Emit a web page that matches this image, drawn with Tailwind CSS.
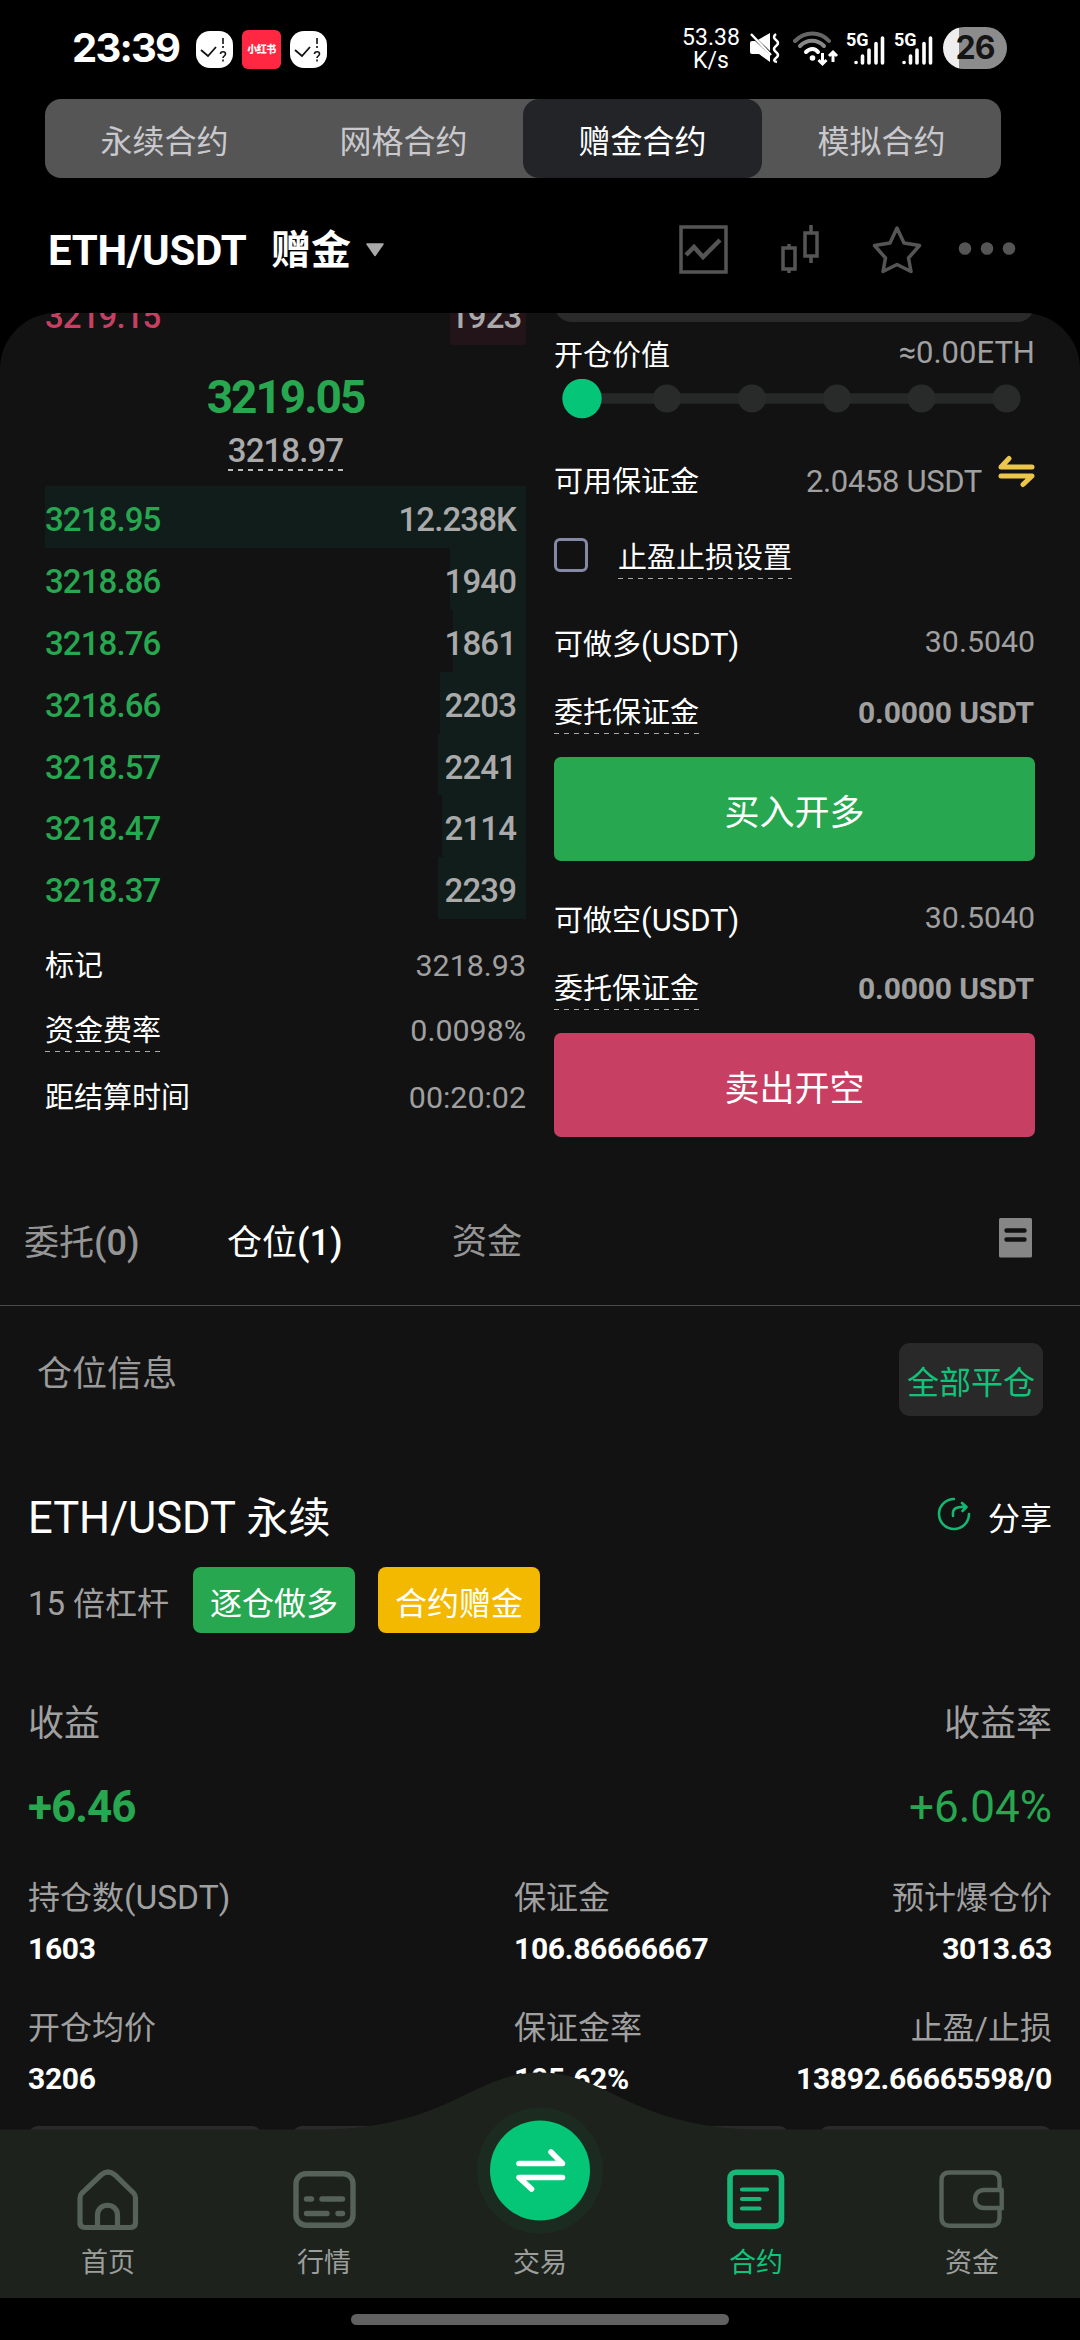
<!DOCTYPE html>
<html lang="zh-CN">
<head>
<meta charset="utf-8">
<title>ETH/USDT</title>
<script src="https://cdn.jsdelivr.net/npm/@tailwindcss/browser@4"></script>
</head>
<body class="bg-black">
<div class="relative h-[2340px] w-[1080px] overflow-hidden bg-black font-[Roboto,'Noto_Sans_CJK_SC',sans-serif] text-[29px] text-white whitespace-nowrap">

  <!-- Status bar -->
  <header class="flex h-[99px] items-center pl-[72px]">
    <div class="flex h-[97px] w-[124px] items-center pb-[3px] font-[Inter,sans-serif] text-[40px] font-bold tracking-[-1.8px]">23:39</div>
    <div class="flex items-center gap-[9px] pb-[1px]">
      <svg width="37" height="37" viewBox="0 0 37 37"><rect width="37" height="37" rx="14" fill="#fff"/><path d="M5 19l7 6 8-9" fill="none" stroke="#111" stroke-width="1.8"/><path d="M27 7v6M27 15v2M24.500 23c0-3 5-3 5 0 0 2-2.500 2-2.500 4M27 28.500v2" fill="none" stroke="#111" stroke-width="1.6"/></svg>
      <div class="flex h-[39px] w-[39px] items-center justify-center rounded-[6px] bg-[#ff2741] text-[10px] font-black tracking-[-0.5px]">小红书</div>
      <svg width="37" height="37" viewBox="0 0 37 37"><rect width="37" height="37" rx="14" fill="#fff"/><path d="M5 19l7 6 8-9" fill="none" stroke="#111" stroke-width="1.8"/><path d="M27 7v6M27 15v2M24.500 23c0-3 5-3 5 0 0 2-2.500 2-2.500 4M27 28.500v2" fill="none" stroke="#111" stroke-width="1.6"/></svg>
    </div>
    <div class="ml-[354px] w-[60px] pb-px text-center text-[23px] leading-[23px]">53.38<br>K/s</div>
    <svg class="-mt-[3px] ml-[8px]" width="32" height="32" viewBox="0 0 32 32"><path d="M1 11q0-2 2-2h4l14-8v29L10 22H3q-2 0-2-2z" fill="#fff"/><path d="M-1 0l24 23" stroke="#000" stroke-width="3"/><path d="M2 2l20 21" stroke="#fff" stroke-width="2.500"/><path d="M27 2q-4 3 0 6t0 6 0 6 0 6 1 4" fill="none" stroke="#fff" stroke-width="2.600"/></svg>
    <svg class="-mt-px ml-[12px]" width="46" height="36" viewBox="0 0 46 36"><g fill="none" stroke-width="4" stroke-linecap="round"><path d="M2 10c10-10 25-10 34 0" stroke="#666"/><path d="M7 15c7-7 17-7 24 0" stroke="#888"/><path d="M13 21c4-4 9-4 12 0" stroke="#fff"/></g><circle cx="19.500" cy="27" r="2.800" fill="#fff"/><path d="M29.500 22v10M25.500 29l4 4 4-4M40 31V21M36 25l4-4 4 4" fill="none" stroke="#fff" stroke-width="3"/></svg>
    <div class="relative -mt-[2px] ml-[7px] h-[36px] w-[48px]">
      <span class="absolute left-0 top-[-1px] text-[18px] font-bold leading-[20px]">5G</span>
      <svg class="absolute left-[8px] top-[5px]" width="32" height="30" viewBox="0 0 32 30"><path d="M2 26.500h.1M8.500 27v-7M15 27V14M22 27V7.500M28.500 27V2" stroke="#fff" stroke-width="3.600" stroke-linecap="round"/></svg>
    </div>
    <div class="relative -mt-[2px] h-[36px] w-[49px]">
      <span class="absolute left-0 top-[-1px] text-[18px] font-bold leading-[20px]">5G</span>
      <svg class="absolute left-[8px] top-[5px]" width="32" height="30" viewBox="0 0 32 30"><path d="M2 26.500h.1M8.500 27v-7M15 27V14M22 27V7.500M28.500 27V2" stroke="#fff" stroke-width="3.600" stroke-linecap="round"/></svg>
    </div>
    <div class="-mt-[3px] flex h-[42px] w-[64px] items-center justify-center rounded-full bg-linear-to-r from-[#eeeeee] from-25% to-[#8c8c8c] to-25% font-[Inter,sans-serif] text-[32px] font-bold tracking-[-1px] text-[#151515]">26</div>
  </header>

  <!-- Contract type switch -->
  <nav class="ml-[45px] grid h-[79px] w-[956px] grid-cols-4 rounded-[16px] bg-[#555555] pt-px text-center text-[32px] leading-[84px] text-[#c9c9cd]">
    <div>永续合约</div><div>网格合约</div>
    <div class="-mt-px h-[79px] rounded-[16px] bg-[#232428] pt-px text-white">赠金合约</div>
    <div>模拟合约</div>
  </nav>

  <!-- Pair header -->
  <div class="flex h-[135px] items-center pl-[48px]">
    <div class="flex w-[631px] items-center pt-[11px] font-bold">
      <span class="w-[223px] text-[42px] leading-[50px] tracking-[-0.3px]">ETH/USDT</span>
      <span class="text-[40px] leading-[50px]">赠金</span>
      <svg class="-mt-[3px] ml-[14px]" width="20" height="14" viewBox="0 0 20 14"><path d="M2 1h16L10 12.500z" fill="#aaa" stroke="#aaa" stroke-width="1.500" stroke-linejoin="round"/></svg>
    </div>
    <svg class="mt-[7px]" width="340" height="50" viewBox="679 224 340 50" fill="none" stroke="#555" stroke-width="3.500">
      <rect x="681" y="227" width="45" height="45"/>
      <path d="M686 255l8-8 9 10 17-17" stroke-width="4.500"/>
      <rect x="783" y="248" width="12" height="21"/><path d="M789 244v4M789 269v4"/>
      <rect x="805" y="233" width="12" height="23"/><path d="M811 225v8M811 256v7"/>
      <path d="M897 228l7 15 15.500 2.500-11 12.500 2.500 13.500-14-7-14 7 2.500-13.500-11-12.500 15.500-2.500z" stroke-linejoin="round"/>
      <g fill="#555" stroke="none"><circle cx="965" cy="248.500" r="6.300"/><circle cx="987" cy="248.500" r="6.300"/><circle cx="1009" cy="248.500" r="6.300"/></g>
    </svg>
  </div>

  <!-- Scrolled panel -->
  <main class="h-[2027px] overflow-hidden rounded-t-[56px] bg-[#121212]">
    <div class="-mt-[30px] flex pl-[45px]">

      <!-- Order book -->
      <section class="w-[481px]">
        <div class="flex h-[62px] justify-between text-[33px] font-medium leading-[67px] tracking-[-0.9px] text-[#aaa]">
          <span class="text-[#c73f62]">3219.15</span><span class="w-[76px] bg-[#221418] pr-[10px] text-right">1923</span>
        </div>
        <div class="mt-[26px] text-center text-[46px] font-bold leading-[52px] tracking-[-2px] text-[#27a74f]">3219.05</div>
        <div class="mx-auto mt-[9px] w-[116px] text-center text-[33px] font-medium leading-[37px] tracking-[-0.9px] text-[#aaa]">3218.97
          <div class="h-[2px] bg-[repeating-linear-gradient(90deg,#bbb_0_5px,transparent_5px_10px)]"></div>
        </div>
        <div class="mt-[15px] text-[33px] font-medium leading-[67px] tracking-[-0.9px] text-[#aaaaaa]" id="bids"></div>

        <div class="mt-[27px] flex h-[40px] justify-between leading-[40px]"><span>标记</span><span class="text-[30.4px] text-[#a0a0a0]">3218.93</span></div>
        <div class="mt-[25px] flex h-[41px] justify-between leading-[40px]"><span class="bg-[repeating-linear-gradient(90deg,#aaa_0_5px,transparent_5px_10px)] bg-[length:100%_1px] bg-bottom bg-no-repeat">资金费率</span><span class="text-[30.4px] text-[#a0a0a0]">0.0098%</span></div>
        <div class="mt-[26px] flex h-[40px] justify-between leading-[40px]"><span>距结算时间</span><span class="text-[30.4px] text-[#a0a0a0]">00:20:02</span></div>
      </section>

      <!-- Order form -->
      <section class="ml-[28px] w-[481px]">
        <div class="h-[39px] rounded-b-[18px] bg-[#2a2a2a]"></div>
        <div class="mt-[14px] flex h-[40px] justify-between leading-[40px]"><span>开仓价值</span><span class="-mt-[3px] text-[31px] text-[#a0a0a0]">≈0.00ETH</span></div>
        <svg class="mt-[3px] block" width="481" height="40" viewBox="554 379 481 40">
          <path d="M582 398.500H1006" stroke="#262727" stroke-width="10.500"/>
          <g fill="#292b2a"><circle cx="667" cy="398.500" r="14"/><circle cx="752" cy="398.500" r="14"/><circle cx="837" cy="398.500" r="14"/><circle cx="921.500" cy="398.500" r="14"/><circle cx="1006.500" cy="398.500" r="14"/></g>
          <circle cx="582" cy="398.500" r="19.700" fill="#05c678"/>
        </svg>
        <div class="mt-[43px] flex h-[40px] leading-[40px]"><span class="flex-1">可用保证金</span><span class="text-[31px] tracking-[-0.35px] text-[#a0a0a0]">2.0458 USDT</span>
          <svg class="-mt-[8px] ml-[15px]" width="38" height="36" viewBox="0 0 38 36" fill="none" stroke="#ebc64a" stroke-width="5" stroke-linecap="round" stroke-linejoin="round"><path d="M35 13H4L12 4.500M4 22h31l-9 8.500"/></svg>
        </div>
        <div class="mt-[36px] flex h-[41px]">
          <div class="h-[34px] w-[34px] rounded-[6px] border-3 border-[#8589a6]"></div>
          <span class="ml-[30px] bg-[repeating-linear-gradient(90deg,#aaa_0_5px,transparent_5px_10px)] bg-[length:100%_1px] bg-bottom bg-no-repeat leading-[40px]">止盈止损设置</span>
        </div>
        <div class="mt-[46px] flex h-[40px] justify-between leading-[40px]"><span>可做多<span class="text-[31px]">(USDT)</span></span><span class="-mt-[3px] text-[30.300px] text-[#a0a0a0]">30.5040</span></div>
        <div class="mt-[28px] flex h-[41px] justify-between leading-[40px]"><span class="bg-[repeating-linear-gradient(90deg,#aaa_0_5px,transparent_5px_10px)] bg-[length:100%_1px] bg-bottom bg-no-repeat">委托保证金</span><span class="pr-[1px] text-[30px] font-bold tracking-[-0.15px] text-[#a0a0a0]">0.0000 USDT</span></div>
        <div class="mt-[23px] h-[104px] rounded-[7px] bg-[#27a74f] text-center text-[35px] leading-[114px]">买入开多</div>
        <div class="mt-[40px] flex h-[40px] justify-between leading-[40px]"><span>可做空<span class="text-[31px]">(USDT)</span></span><span class="-mt-[3px] text-[30.300px] text-[#a0a0a0]">30.5040</span></div>
        <div class="mt-[28px] flex h-[41px] justify-between leading-[40px]"><span class="bg-[repeating-linear-gradient(90deg,#aaa_0_5px,transparent_5px_10px)] bg-[length:100%_1px] bg-bottom bg-no-repeat">委托保证金</span><span class="pr-[1px] text-[30px] font-bold tracking-[-0.15px] text-[#a0a0a0]">0.0000 USDT</span></div>
        <div class="mt-[23px] h-[104px] rounded-[7px] bg-[#c73f62] text-center text-[35px] leading-[114px]">卖出开空</div>
      </section>
    </div>

    <!-- Position tabs -->
    <div class="mt-[43px] flex h-[126px] items-center border-b border-[#4a4a4a] pl-[24px] pt-[2px] text-[35px] text-[#959595]">
      <div class="w-[203px]">委托<span class="text-[36px] font-medium">(0)</span></div>
      <div class="w-[225px] text-white">仓位<span class="text-[36px] font-medium">(1)</span></div>
      <div class="w-[547px]">资金</div>
      <svg class="-mt-[11px]" width="33" height="40" viewBox="0 0 33 40"><rect width="33" height="39.500" rx="1.500" fill="#868686"/><path d="M7.500 12.500h18M7.500 21.500h18" stroke="#121212" stroke-width="4.400" stroke-linecap="round"/></svg>
    </div>

    <div class="mt-[37px] flex h-[73px] items-center justify-between pl-[37px] pr-[37px]">
      <span class="pb-[9px] text-[35px] text-[#9a9a9a]">仓位信息</span>
      <span class="h-[73px] w-[144px] rounded-[11px] bg-[#292929] text-center text-[32px] leading-[81px] text-[#12c27a]">全部平仓</span>
    </div>

    <!-- Position card -->
    <div class="pl-[28px] pr-[28px] text-[32px] leading-[40px] text-[#a0a0a0]">
      <div class="mt-[83px] flex h-[40px] text-white"><span class="flex-1 text-[42px]"><span class="text-[43.500px]">ETH/USDT</span> 永续</span>
        <svg class="-mt-[2px] mr-[17px]" width="34" height="34" viewBox="0 0 34 34" fill="none" stroke="#12b872" stroke-width="2.600" stroke-linecap="round" stroke-linejoin="round"><path d="M17 2A15 15 0 1 0 32 17M16 19v-4q1-6 13-5M25 6l4.500 4-4 4"/></svg>
        <span>分享</span></div>
      <div class="mt-[28px] flex h-[66px] leading-[74px]">
        <span class="w-[165px]"><span class="text-[33px]">15</span> 倍杠杆</span>
        <span class="w-[162px] rounded-[8px] bg-[#27a74f] text-center text-white">逐仓做多</span>
        <span class="ml-[23px] w-[162px] rounded-[8px] bg-[#f3b800] text-center text-white">合约赠金</span>
      </div>
      <div class="mt-[71px] flex h-[39px] justify-between text-[36px]"><span>收益</span><span>收益率</span></div>
      <div class="mt-[44px] flex h-[40px] justify-between text-[44px] text-[#27a74f]"><span class="font-bold tracking-[-1px]">+6.46</span><span>+6.04%</span></div>
      <div class="mt-[51px] grid h-[40px] grid-cols-[486px_auto_auto]"><span>持仓数<span class="text-[33.500px]">(USDT)</span></span><span>保证金</span><span class="text-right">预计爆仓价</span></div>
      <div class="mt-[11px] grid grid-cols-[486px_auto_auto] text-[30px] font-bold tracking-[-0.3px] text-white"><span>1603</span><span>106.86666667</span><span class="text-right">3013.63</span></div>
      <div class="mt-[39px] grid grid-cols-[486px_auto_auto]"><span>开仓均价</span><span>保证金率</span><span class="text-right">止盈/止损</span></div>
      <div class="mt-[11px] grid grid-cols-[486px_auto_auto] text-[30px] font-bold tracking-[-0.3px] text-white"><span>3206</span><span>105.62%</span><span class="text-right">13892.66665598/0</span></div>
      <div class="mt-[27px] grid grid-cols-4 gap-[30px]"><div class="h-[78px] rounded-[10px] bg-[#2a2a2a]"></div><div class="h-[78px] rounded-[10px] bg-[#2a2a2a]"></div><div class="h-[78px] rounded-[10px] bg-[#2a2a2a]"></div><div class="h-[78px] rounded-[10px] bg-[#2a2a2a]"></div></div>
    </div>
  </main>

  <!-- Bottom navigation, floating over the page -->
  <footer class="absolute bottom-0 left-0 h-[270px] w-[1080px]">
    <svg class="absolute left-0 top-0" width="1080" height="270" viewBox="0 2070 1080 270">
      <path d="M0 2298V2129.500H320C375 2129.500 415 2118 450 2102C488 2084 508 2072.500 540 2072.500S592 2084 630 2102C665 2118 705 2129.500 760 2129.500H1080V2298z" fill="#1d221d"/>
      <path d="M0 2298h1080v42H0z" fill="#000"/>
      <circle cx="540" cy="2170.500" r="63" fill="#1c2b20"/><circle cx="540" cy="2170.500" r="50" fill="#05c576"/>
      <path d="M519 2163.500h43.500L551 2152M562.500 2177.500H519l12.500 11.500" fill="none" stroke="#fff" stroke-width="5.600" stroke-linecap="round" stroke-linejoin="round"/>
    </svg>
    <div class="relative grid h-[244px] grid-cols-5 pt-[94px] text-center text-[27px] leading-[36px] text-[#9b9e9b]">
      <div><svg class="mx-auto mb-[13px] block" width="68" height="68" viewBox="74 2164 68 68" fill="none" stroke="#56615a" stroke-width="5.200"><path d="M80 2225V2198Q80 2195 82 2193L101 2175Q108 2169 115 2175L133.500 2193Q135.500 2195 135.500 2198V2222.500Q135.500 2227.500 130.500 2227.500H85Q80 2227.500 80 2222.500M97.500 2227v-12c0-13 20-13 20 0v12"/></svg>首页</div>
      <div><svg class="mx-auto mb-[13px] block" width="68" height="68" viewBox="290 2164 68 68" fill="none" stroke="#56615a" stroke-width="5.400" stroke-linecap="round"><rect x="296" y="2173.700" width="57" height="51.500" rx="10"/><path d="M306.500 2199h5M322 2199h20.500M306.500 2213.500h20.500M338 2213.500h4.500"/></svg>行情</div>
      <div class="pt-[81px]">交易</div>
      <div class="text-[#12c27a]"><svg class="mx-auto mb-[13px] block" width="68" height="68" viewBox="722 2164 68 68" fill="none" stroke="#18b978" stroke-width="5.600" stroke-linecap="round"><rect x="730" y="2172.300" width="51.500" height="53.800" rx="6"/><path d="M742 2189.500h25M742 2199h17.500M742 2208.500h17.500" stroke-width="4.200"/></svg>合约</div>
      <div><svg class="mx-auto mb-[13px] block" width="68" height="68" viewBox="938 2164 68 68" fill="none" stroke="#56615a" stroke-width="4.400"><path d="M999.500 2189.500V2180Q999.500 2172.500 991 2172.500H950Q941.500 2172.500 941.500 2180V2218Q941.500 2225.700 950 2225.700H991Q999.500 2225.700 999.500 2218V2208.500M1003.500 2190H984C972 2190 972 2208 984 2208H1001.700V2190"/></svg>资金</div>
    </div>
    <div class="relative mx-auto h-[11px] w-[378px] rounded-full bg-[#616161]"></div>
  </footer>
</div>
<script>
  // price, size, depth bar width in px
  const bids = [["3218.95","12.238K",481],["3218.86","1940",76],["3218.76","1861",73],["3218.66","2203",86],["3218.57","2241",88],["3218.47","2114",84],["3218.37","2239",88]];
  document.getElementById("bids").innerHTML = bids.map(([p, q, w]) =>
    `<div class="flex h-[61.9px] justify-between bg-no-repeat bg-right pr-[10px]" style="background-image:linear-gradient(#111d1b,#111d1b);background-size:${w}px 100%"><span class="text-[#27a74f]">${p}</span><span>${q}</span></div>`).join("");
</script>
</body>
</html>
